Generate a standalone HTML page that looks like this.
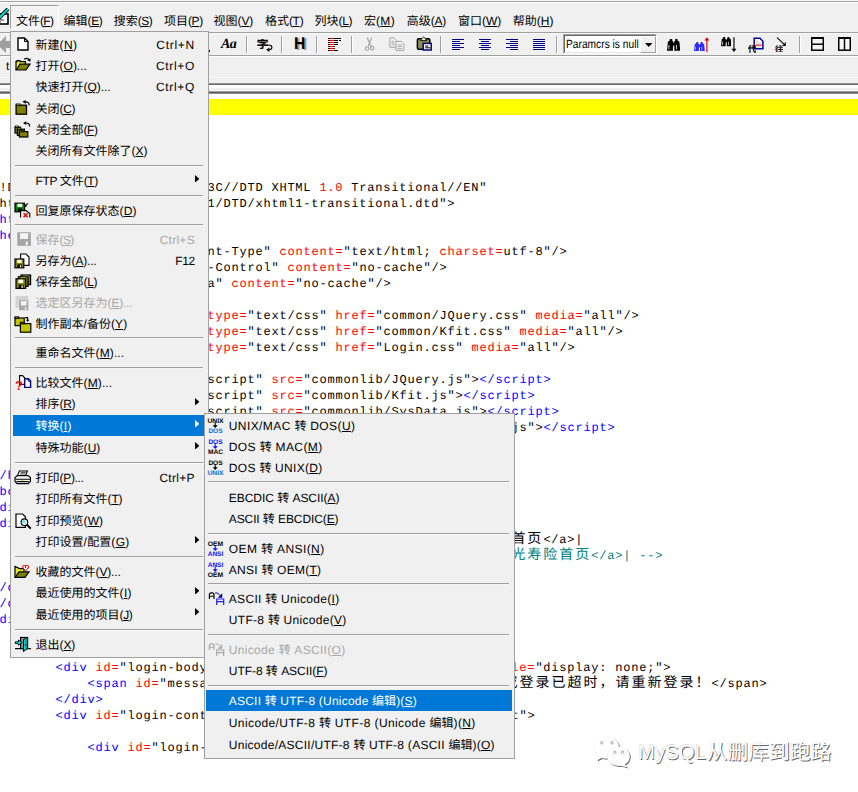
<!DOCTYPE html>
<html lang="zh"><head><meta charset="utf-8"><title>UltraEdit</title>
<style>
html,body{margin:0;padding:0;background:#fff}
body{width:858px;height:792px;overflow:hidden}
#app{position:relative;width:858px;height:792px;overflow:hidden;background:#fff;font-family:"Liberation Sans","Noto Sans CJK SC",sans-serif;font-kerning:none;text-rendering:geometricPrecision}
#app div,#app svg.a{position:absolute}
.r{white-space:nowrap;font:12px/16px "Liberation Sans","Noto Sans CJK SC",sans-serif;color:#000}
.r u{text-decoration:underline;text-underline-offset:1px;text-decoration-thickness:1px}
.code{white-space:pre;font:12px/16px "Liberation Mono",monospace;letter-spacing:0.798px;color:#000;left:-8.6px}
.code .cj{font-family:"Liberation Mono","Noto Sans CJK SC",monospace;font-size:14px;letter-spacing:2px;line-height:1}
.b{color:#00f}.rd{color:#f00}.t{color:#008080}.o{color:#ff8000}
</style></head>
<body>
<div id="app">
<div style="left:0px;top:0px;width:858px;height:99px;background:#f0f0f0;"></div>
<div style="left:0px;top:0px;width:858px;height:1px;background:#f6f6f6;"></div>
<div style="left:0px;top:1px;width:858px;height:1px;background:#a0a0a0;"></div>
<div style="left:0px;top:2px;width:858px;height:1px;background:#fff;"></div>
<div style="left:0px;top:32px;width:858px;height:1px;background:#a0a0a0;"></div>
<div style="left:0px;top:33px;width:858px;height:1px;background:#fafafa;"></div>
<div style="left:0px;top:55px;width:858px;height:1px;background:#a0a0a0;"></div>
<div style="left:0px;top:56px;width:858px;height:1px;background:#fff;"></div>
<div style="left:0px;top:77px;width:858px;height:1px;background:#f8f8f8;"></div>
<div style="left:0px;top:83px;width:858px;height:1px;background:#909090;"></div>
<div style="left:0px;top:84px;width:858px;height:1px;background:#686868;"></div>
<div style="left:0px;top:85px;width:858px;height:3px;background:#fff;"></div>
<div style="left:0px;top:88px;width:858px;height:3px;background:#f0f0f0;"></div>
<div style="left:0px;top:91px;width:858px;height:1px;background:#a0a0a0;"></div>
<div style="left:0px;top:92px;width:858px;height:1px;background:#606060;"></div>
<div style="left:0px;top:93px;width:858px;height:1px;background:#888;"></div>
<div style="left:0px;top:94px;width:858px;height:5px;background:#fff;"></div>
<div style="left:0px;top:99px;width:858px;height:16px;background:#ffff00;"></div>
<div class="code" style="top:180.00px">&lt;!DOCTYPE html PUBLIC "-//W3C//DTD XHTML <span class="rd">1.0</span> Transitional//EN"</div>
<div class="code" style="top:196.00px">"html.dtd/www.w3.org/TR/xht1/DTD/xhtml1-transitional.dtd"&gt;</div>
<div class="code" style="top:212.00px"><span class="b">&lt;html&gt;</span></div>
<div class="code" style="top:228.00px"><span class="b">&lt;head&gt;</span></div>
<div class="code" style="top:244.00px">    <span class="b">&lt;meta </span><span class="rd">http-equiv=</span>"Content-Type" <span class="rd">content=</span>"text/html; <span class="rd">charset=</span>utf-8"/&gt;</div>
<div class="code" style="top:260.00px">    <span class="b">&lt;meta </span><span class="rd">http-equiv=</span>"Cache-Control" <span class="rd">content=</span>"no-cache"/&gt;</div>
<div class="code" style="top:276.00px">    <span class="b">&lt;meta </span><span class="rd">http-equiv=</span>"Pragma" <span class="rd">content=</span>"no-cache"/&gt;</div>
<div class="code" style="top:308.00px">    <span class="b">&lt;link </span><span class="rd">rel=</span>"stylesheet" <span class="rd">type=</span>"text/css" <span class="rd">href=</span>"common/JQuery.css" <span class="rd">media=</span>"all"/&gt;</div>
<div class="code" style="top:324.00px">    <span class="b">&lt;link </span><span class="rd">rel=</span>"stylesheet" <span class="rd">type=</span>"text/css" <span class="rd">href=</span>"common/Kfit.css" <span class="rd">media=</span>"all"/&gt;</div>
<div class="code" style="top:340.00px">    <span class="b">&lt;link </span><span class="rd">rel=</span>"stylesheet" <span class="rd">type=</span>"text/css" <span class="rd">href=</span>"Login.css" <span class="rd">media=</span>"all"/&gt;</div>
<div class="code" style="top:372.00px">    <span class="b">&lt;script </span><span class="rd">type=</span>"text/javascript" <span class="rd">src=</span>"commonlib/JQuery.js"&gt;<span class="b">&lt;/script&gt;</span></div>
<div class="code" style="top:388.00px">    <span class="b">&lt;script </span><span class="rd">type=</span>"text/javascript" <span class="rd">src=</span>"commonlib/Kfit.js"&gt;<span class="b">&lt;/script&gt;</span></div>
<div class="code" style="top:404.00px">    <span class="b">&lt;script </span><span class="rd">type=</span>"text/javascript" <span class="rd">src=</span>"commonlib/SysData.js"&gt;<span class="b">&lt;/script&gt;</span></div>
<div class="code" style="top:420.00px">    <span class="b">&lt;script </span><span class="rd">type=</span>"text/javascript" <span class="rd">src=</span>"commonlib/Kfit.Validator.js"&gt;<span class="b">&lt;/script&gt;</span></div>
<div class="code" style="top:468.00px"><span class="b">&lt;/head&gt;</span></div>
<div class="code" style="top:484.00px"><span class="b">&lt;body&gt;</span></div>
<div class="code" style="top:500.00px"><span class="b">&lt;div </span><span class="rd">id=</span>"login-top"&gt;</div>
<div class="code" style="top:516.00px"><span class="b">&lt;div </span><span class="rd">id=</span>"login-nav"&gt;</div>
<div class="code" style="top:532.00px">            <span class="b">&lt;a </span><span class="rd">href=</span>"/portal/kfit/index.html"&gt;                   <span class="cj">首页</span>&lt;/a&gt;|</div>
<div class="code" style="top:548.00px"><span class="t">            &lt;!-- &lt;a class=nav-life-index&gt;</span>                      <span class="t"><span class="cj">阳光寿险首页</span>&lt;/a&gt;| --&gt;</span></div>
<div class="code" style="top:580.00px"><span class="b">&lt;/div&gt;</span></div>
<div class="code" style="top:596.00px"><span class="b">&lt;/div&gt;</span></div>
<div class="code" style="top:612.00px"><span class="b">&lt;div </span><span class="rd">id=</span>"login-main"&gt;</div>
<div class="code" style="top:660.00px">        <span class="b">&lt;div </span><span class="rd">id=</span>"login-body-message" <span class="rd">class=</span>"login-message"    <span class="rd">style=</span>"display: none;"&gt;</div>
<div class="code" style="top:676.00px">            <span class="b">&lt;span </span><span class="rd">id=</span>"message-contents"&gt;<span class="cj">对不起，您还没有登录系统或登录已超时，请重新登录！</span>&lt;/span&gt;</div>
<div class="code" style="top:692.00px">        <span class="b">&lt;/div&gt;</span></div>
<div class="code" style="top:708.00px">        <span class="b">&lt;div </span><span class="rd">id=</span>"login-content" <span class="rd">class=</span>"login-content-default-right"&gt;</div>
<div class="code" style="top:740.00px">            <span class="b">&lt;div </span><span class="rd">id=</span>"login-form"&gt;</div>
<div style="left:10px;top:5px;width:49px;height:24px;background:#f3f3f3;box-sizing:border-box;border:1px solid;border-color:#a0a0a0 #fff #fff #a0a0a0"></div>
<div class="r" aria-label="文件(F)" style="left:16.00px;top:12.50px;">文件<span style="letter-spacing:-0.707px">(<u>F</u>)</span></div>
<div class="r" aria-label="编辑(E)" style="left:63.60px;top:12.50px;">编辑<span style="letter-spacing:-0.465px">(<u>E</u>)</span></div>
<div class="r" aria-label="搜索(S)" style="left:113.80px;top:12.50px;">搜索<span style="letter-spacing:-0.599px">(<u>S</u>)</span></div>
<div class="r" aria-label="项目(P)" style="left:164.10px;top:12.50px;">项目<span style="letter-spacing:-0.499px">(<u>P</u>)</span></div>
<div class="r" aria-label="视图(V)" style="left:213.60px;top:12.50px;">视图<span style="letter-spacing:-0.199px">(<u>V</u>)</span></div>
<div class="r" aria-label="格式(T)" style="left:264.90px;top:12.50px;">格式<span style="letter-spacing:-0.307px">(<u>T</u>)</span></div>
<div class="r" aria-label="列块(L)" style="left:314.50px;top:12.50px;">列块<span style="letter-spacing:-0.322px">(<u>L</u>)</span></div>
<div class="r" aria-label="宏(M)" style="left:363.90px;top:12.50px;">宏<span style="letter-spacing:0.404px">(<u>M</u>)</span></div>
<div class="r" aria-label="高级(A)" style="left:406.80px;top:12.50px;">高级<span style="letter-spacing:-0.265px">(<u>A</u>)</span></div>
<div class="r" aria-label="窗口(W)" style="left:457.90px;top:12.50px;">窗口<span style="letter-spacing:-0.006px">(<u>W</u>)</span></div>
<div class="r" aria-label="帮助(H)" style="left:512.70px;top:12.50px;">帮助<span style="letter-spacing:0.014px">(<u>H</u>)</span></div>
<div style="left:246px;top:36px;width:1px;height:17px;background:#a0a0a0;"></div>
<div style="left:247px;top:36px;width:1px;height:17px;background:#fff;"></div>
<div style="left:281px;top:36px;width:1px;height:17px;background:#a0a0a0;"></div>
<div style="left:282px;top:36px;width:1px;height:17px;background:#fff;"></div>
<div style="left:316px;top:36px;width:1px;height:17px;background:#a0a0a0;"></div>
<div style="left:317px;top:36px;width:1px;height:17px;background:#fff;"></div>
<div style="left:351px;top:36px;width:1px;height:17px;background:#a0a0a0;"></div>
<div style="left:352px;top:36px;width:1px;height:17px;background:#fff;"></div>
<div style="left:440px;top:36px;width:1px;height:17px;background:#a0a0a0;"></div>
<div style="left:441px;top:36px;width:1px;height:17px;background:#fff;"></div>
<div style="left:556px;top:36px;width:1px;height:17px;background:#a0a0a0;"></div>
<div style="left:557px;top:36px;width:1px;height:17px;background:#fff;"></div>
<div style="left:799px;top:36px;width:1px;height:17px;background:#a0a0a0;"></div>
<div style="left:800px;top:36px;width:1px;height:17px;background:#fff;"></div>
<svg class="a" style="left:0px;top:36px" width="10" height="17" viewBox="0 0 10 17" ><path d="M10 5 H6 V0 L-3 8.5 L6 17 V12 H10 Z" fill="#a0a0a0" /></svg>
<svg class="a" style="left:0px;top:8px" width="9" height="17" viewBox="0 0 9 17" ><rect x="-6" y="6" width="14" height="10" fill="#fff" stroke="#000" stroke-width="1.6"/><path d="M-2 11 L8 1" fill="none" stroke="#000" stroke-width="4" /><path d="M-2 11 L8 1" fill="none" stroke="#00d8d8" stroke-width="2" /><path d="M-4 12 h8 M-4 14 h5" fill="none" stroke="#000" stroke-width="0.8" /></svg>
<div style="left:221px;top:37.2px;font:italic bold 14px/16px 'Liberation Serif',serif;letter-spacing:-0.7px;color:#000">Aa</div>
<div style="left:208.6px;top:49.6px;width:1.6px;height:2px;background:#000;"></div>
<svg class="a" style="left:257px;top:38.6px" width="10.8" height="10.4" viewBox="30 -850 940 940" preserveAspectRatio="none"><text x="0" y="0" font-size="1000" font-family="'Liberation Sans', 'Noto Sans CJK SC', sans-serif" font-weight="500" fill="#000" stroke="#000" stroke-width="36">字</text></svg>
<svg class="a" style="left:264.4px;top:43.6px" width="9" height="9" viewBox="0 0 9 9" ><path d="M3.4 1.2 H5.8 Q7.9 1.4 7.9 3.6 Q7.9 5.6 5.2 5.7" fill="none" stroke="#000" stroke-width="1.1" /><path d="M2.2 5.7 L5.4 3.5 V7.9 Z" fill="#000" /></svg>
<div style="left:295.6px;top:34.6px;font:bold 17px/20px 'Liberation Sans',sans-serif;color:#9a9a9a;transform:scaleX(.92);transform-origin:0 0">H</div>
<div style="left:294.4px;top:34.2px;font:bold 17px/20px 'Liberation Sans',sans-serif;color:#000;transform:scaleX(.92);transform-origin:0 0">H</div>
<svg class="a" style="left:328px;top:38px" width="14" height="14" viewBox="0 0 14 14" shape-rendering="crispEdges"><rect x="0" y="0" width="13" height="1" fill="#000" /><rect x="2" y="0" width="4" height="1" fill="#ff0000" /><rect x="0" y="2" width="10" height="1" fill="#000" /><rect x="2" y="2" width="4" height="1" fill="#ff0000" /><rect x="0" y="4" width="10" height="1" fill="#000" /><rect x="2" y="4" width="4" height="1" fill="#ff0000" /><rect x="0" y="6" width="10" height="1" fill="#000" /><rect x="2" y="6" width="4" height="1" fill="#ff0000" /><rect x="0" y="8" width="7" height="1" fill="#000" /><rect x="2" y="8" width="4" height="1" fill="#ff0000" /><rect x="0" y="10" width="7" height="1" fill="#000" /><rect x="2" y="10" width="4" height="1" fill="#ff0000" /><rect x="0" y="12" width="10" height="1" fill="#000" /><rect x="2" y="12" width="4" height="1" fill="#ff0000" /><rect x="11" y="2" width="2" height="1" fill="#000" /></svg>
<svg class="a" style="left:364px;top:36.5px" width="11" height="15" viewBox="0 0 11 15" ><path d="M3.1 0.6 L7.2 9.6 M7.6 0.6 L4 9.8" fill="none" stroke="#a4a4a4" stroke-width="1.15" /><circle cx="3.1" cy="11.5" r="1.75" fill="none" stroke="#a4a4a4" stroke-width="1.1"/><circle cx="8.1" cy="11.1" r="1.75" fill="none" stroke="#a4a4a4" stroke-width="1.1"/></svg>
<svg class="a" style="left:389px;top:36.6px" width="16" height="14" viewBox="0 0 16 14" ><path d="M0.9 0.9 h3.9 l2.5 2.5 v6.9 h-6.4 Z" fill="#f4f4f4" stroke="#a4a4a4" stroke-width="1" /><rect x="2.5" y="3.9" width="3" height="0.9" fill="#a4a4a4" /><rect x="2.5" y="5.7" width="3" height="0.9" fill="#a4a4a4" /><rect x="2.5" y="7.5" width="3" height="0.9" fill="#a4a4a4" /><path d="M6.9 4.4 h5.5 l2.5 2.5 v6.5 h-8 Z" fill="#f4f4f4" stroke="#a4a4a4" stroke-width="1" /><rect x="8.5" y="7.4" width="4.6" height="0.9" fill="#a4a4a4" /><rect x="8.5" y="9.2" width="4.6" height="0.9" fill="#a4a4a4" /><rect x="8.5" y="11" width="4.6" height="0.9" fill="#a4a4a4" /></svg>
<svg class="a" style="left:415.5px;top:36.3px" width="17" height="15.5" viewBox="0 0 17 15.5" ><rect x="1.4" y="2.8" width="12.4" height="10.4" fill="#8e8e52" stroke="#000" stroke-width="1.5" rx="1.2"/><path d="M4.6 4.6 H10.6 L9.4 2.6 L7.6 1 L5.8 2.6 Z" fill="#fff" stroke="#000" stroke-width="0.9" /><path d="M6.4 3.4 L7.6 1.9 L8.8 3.4 Z" fill="#e8e800" /><rect x="7.2" y="7.4" width="8" height="6.6" fill="#fff" stroke="#000080" stroke-width="1.5"/><rect x="9.2" y="9.6" width="3.2" height="1" fill="#000" /><rect x="9.2" y="11.3" width="5" height="1" fill="#000" /></svg>
<svg class="a" style="left:452px;top:39px" width="13" height="12" viewBox="0 0 13 12" shape-rendering="crispEdges"><rect x="0" y="0" width="12" height="1" fill="#00008b" /><rect x="0" y="2" width="8" height="1" fill="#00008b" /><rect x="0" y="4" width="12" height="1" fill="#00008b" /><rect x="0" y="6" width="8" height="1" fill="#00008b" /><rect x="0" y="8" width="12" height="1" fill="#00008b" /><rect x="0" y="10" width="8" height="1" fill="#00008b" /></svg>
<svg class="a" style="left:479px;top:39px" width="13" height="12" viewBox="0 0 13 12" shape-rendering="crispEdges"><rect x="0" y="0" width="12" height="1" fill="#00008b" /><rect x="2" y="2" width="8" height="1" fill="#00008b" /><rect x="0" y="4" width="12" height="1" fill="#00008b" /><rect x="2" y="6" width="8" height="1" fill="#00008b" /><rect x="0" y="8" width="12" height="1" fill="#00008b" /><rect x="2" y="10" width="8" height="1" fill="#00008b" /></svg>
<svg class="a" style="left:506px;top:39px" width="13" height="12" viewBox="0 0 13 12" shape-rendering="crispEdges"><rect x="0" y="0" width="12" height="1" fill="#00008b" /><rect x="4" y="2" width="8" height="1" fill="#00008b" /><rect x="0" y="4" width="12" height="1" fill="#00008b" /><rect x="4" y="6" width="8" height="1" fill="#00008b" /><rect x="0" y="8" width="12" height="1" fill="#00008b" /><rect x="4" y="10" width="8" height="1" fill="#00008b" /></svg>
<svg class="a" style="left:533px;top:39px" width="13" height="12" viewBox="0 0 13 12" shape-rendering="crispEdges"><rect x="0" y="0" width="12" height="1" fill="#00008b" /><rect x="0" y="2" width="12" height="1" fill="#00008b" /><rect x="0" y="4" width="12" height="1" fill="#00008b" /><rect x="0" y="6" width="12" height="1" fill="#00008b" /><rect x="0" y="8" width="12" height="1" fill="#00008b" /><rect x="0" y="10" width="12" height="1" fill="#00008b" /></svg>
<div style="left:563px;top:34px;width:94px;height:20px;background:#fff;box-sizing:border-box;border:1px solid;border-color:#a0a0a0 #fff #fff #a0a0a0"></div>
<div style="left:564px;top:35px;width:92px;height:18px;background:#fff;box-sizing:border-box;border:1px solid;border-color:#696969 #e3e3e3 #e3e3e3 #696969"></div>
<div style="left:566.2px;top:36.8px;font:12px/14px 'Liberation Sans',sans-serif;color:#000;white-space:nowrap;transform:scaleX(.852);transform-origin:0 0">Paramcrs is null</div>
<div style="left:640px;top:36px;width:16px;height:17px;background:#f0f0f0;box-sizing:border-box;border:1px solid;border-color:#fff #a0a0a0 #a0a0a0 #fff"></div>
<svg class="a" style="left:644.5px;top:42.8px" width="7.4" height="4" viewBox="0 0 7.4 4" ><path d="M0 0 H7.4 L3.7 4 Z" fill="#000" /></svg>
<svg class="a" style="left:666.8px;top:39.1px" width="13.4" height="11.7" viewBox="0 0 13.4 11.7" ><path d="M2.8 0 H5.2 V1.5 L6.2 2.8 L5.9 11.7 H0 L0.9 2.8 L2.8 1.5 Z" fill="#000" /><path d="M8.2 0 H10.5 V1.5 L12.4 2.8 L13.3 11.7 H7.4 L7.2 2.8 L8.2 1.5 Z" fill="#000" /><rect x="5.6" y="3.6" width="2.2" height="3" fill="#000" /><rect x="1.5" y="6" width="0.8" height="4.3" fill="#fff" /><rect x="9.2" y="6" width="0.8" height="4.3" fill="#fff" /></svg>
<svg class="a" style="left:694px;top:42.2px" width="10.9" height="9.3" viewBox="0 0 13.4 11.7" preserveAspectRatio="none"><path d="M2.8 0 H5.2 V1.5 L6.2 2.8 L5.9 11.7 H0 L0.9 2.8 L2.8 1.5 Z" fill="#2828ff" /><path d="M8.2 0 H10.5 V1.5 L12.4 2.8 L13.3 11.7 H7.4 L7.2 2.8 L8.2 1.5 Z" fill="#2828ff" /><rect x="5.6" y="3.6" width="2.2" height="3" fill="#2828ff" /><rect x="1.5" y="6" width="0.8" height="4.3" fill="#d8d8ff" /><rect x="9.2" y="6" width="0.8" height="4.3" fill="#d8d8ff" /></svg>
<svg class="a" style="left:703.5px;top:36.5px" width="6.4" height="15.2" viewBox="0 0 6.4 15.2" ><path d="M2.9 15 V2" fill="none" stroke="#e00000" stroke-width="1.15" /><path d="M0.5 3.6 L2.9 0.3 L5.3 3.6 Z" fill="#e00000" /></svg>
<svg class="a" style="left:720.9px;top:37.3px" width="10.6" height="9.3" viewBox="0 0 13.4 11.7" preserveAspectRatio="none"><path d="M2.8 0 H5.2 V1.5 L6.2 2.8 L5.9 11.7 H0 L0.9 2.8 L2.8 1.5 Z" fill="#000" /><path d="M8.2 0 H10.5 V1.5 L12.4 2.8 L13.3 11.7 H7.4 L7.2 2.8 L8.2 1.5 Z" fill="#000" /><rect x="5.6" y="3.6" width="2.2" height="3" fill="#000" /><rect x="1.5" y="6" width="0.8" height="4.3" fill="#fff" /><rect x="9.2" y="6" width="0.8" height="4.3" fill="#fff" /></svg>
<svg class="a" style="left:730.6px;top:37px" width="6.4" height="15.2" viewBox="0 0 6.4 15.2" ><path d="M2.95 0.2 V13" fill="none" stroke="#000" stroke-width="1.15" /><path d="M0.5 11.8 L2.95 14.9 L5.4 11.8 Z" fill="#000" /></svg>
<svg class="a" style="left:752.6px;top:36.5px" width="11.5" height="13" viewBox="0 0 11.5 13" ><path d="M1.2 1.2 H7 L9.9 4.2 V11.8 H1.2 Z" fill="#fff" stroke="#000090" stroke-width="1.5" /><rect x="3" y="3.8" width="2.6" height="0.7" fill="#a8a8a8" /><rect x="3" y="5.8" width="5.4" height="0.7" fill="#a8a8a8" /><rect x="2.8" y="7.6" width="5.8" height="1.1" fill="#f00000" /><rect x="3" y="9.7" width="5.4" height="0.7" fill="#a8c8c8" /></svg>
<svg class="a" style="left:747.6px;top:44.6px" width="8.8" height="8" viewBox="20 -860 960 960" preserveAspectRatio="none"><text x="0" y="0" font-size="1000" font-family="'Liberation Sans', 'Noto Sans CJK SC', sans-serif" font-weight="500" fill="#000" stroke="#000" stroke-width="30">代</text></svg>
<svg class="a" style="left:776px;top:36.5px" width="11" height="10" viewBox="0 0 11 10" ><path d="M1 0.7 L8.8 7.9" fill="none" stroke="#000" stroke-width="1.05" /><path d="M9.9 9 L9.7 4.6 L8.2 7.2 L5.4 8.8 Z" fill="#000" /></svg>
<svg class="a" style="left:774.7px;top:44.6px" width="8.8" height="7.8" viewBox="20 -860 960 960" preserveAspectRatio="none"><text x="0" y="0" font-size="1000" font-family="'Liberation Sans', 'Noto Sans CJK SC', sans-serif" font-weight="500" fill="#000" stroke="#000" stroke-width="30">往</text></svg>
<svg class="a" style="left:811px;top:37px" width="13" height="14" viewBox="0 0 13 14" ><rect x="0.75" y="1" width="11.5" height="12.2" fill="#fff" stroke="#000" stroke-width="1.5"/><rect x="0" y="0" width="13" height="2" fill="#000" /><rect x="0.75" y="6.5" width="11.5" height="1.5" fill="#000" /><rect x="2" y="3.5" width="9" height="0.5" fill="#d8d8d8" /><rect x="2" y="5" width="9" height="0.5" fill="#d8d8d8" /><rect x="2" y="9.5" width="9" height="0.5" fill="#d8d8d8" /><rect x="2" y="11" width="9" height="0.5" fill="#d8d8d8" /></svg>
<svg class="a" style="left:838px;top:37px" width="13" height="14" viewBox="0 0 13 14" ><rect x="0.75" y="1" width="11.5" height="12.2" fill="#fff" stroke="#000" stroke-width="1.5"/><rect x="0" y="0" width="13" height="2" fill="#000" /><rect x="5.75" y="1" width="1.5" height="12" fill="#000" /><rect x="2" y="4" width="3" height="0.5" fill="#d8d8d8" /><rect x="8" y="4" width="3" height="0.5" fill="#d8d8d8" /><rect x="2" y="6" width="3" height="0.5" fill="#d8d8d8" /><rect x="8" y="6" width="3" height="0.5" fill="#d8d8d8" /><rect x="2" y="8" width="3" height="0.5" fill="#d8d8d8" /><rect x="8" y="8" width="3" height="0.5" fill="#d8d8d8" /><rect x="2" y="10" width="3" height="0.5" fill="#d8d8d8" /><rect x="8" y="10" width="3" height="0.5" fill="#d8d8d8" /></svg>
<div style="left:6px;top:58.5px;font:12px/14px 'Liberation Sans',sans-serif;color:#000">t</div>
<div style="left:10px;top:31px;width:199px;height:627px;background:#f0f0f0;box-sizing:border-box;border:1px solid #a0a0a0"></div>
<div style="left:15px;top:165px;width:188px;height:1px;background:#a0a0a0;"></div>
<div style="left:15px;top:166px;width:188px;height:1px;background:#f8f8f8;"></div>
<div style="left:15px;top:195px;width:188px;height:1px;background:#a0a0a0;"></div>
<div style="left:15px;top:196px;width:188px;height:1px;background:#f8f8f8;"></div>
<div style="left:15px;top:224px;width:188px;height:1px;background:#a0a0a0;"></div>
<div style="left:15px;top:225px;width:188px;height:1px;background:#f8f8f8;"></div>
<div style="left:15px;top:337px;width:188px;height:1px;background:#a0a0a0;"></div>
<div style="left:15px;top:338px;width:188px;height:1px;background:#f8f8f8;"></div>
<div style="left:15px;top:367px;width:188px;height:1px;background:#a0a0a0;"></div>
<div style="left:15px;top:368px;width:188px;height:1px;background:#f8f8f8;"></div>
<div style="left:15px;top:462px;width:188px;height:1px;background:#a0a0a0;"></div>
<div style="left:15px;top:463px;width:188px;height:1px;background:#f8f8f8;"></div>
<div style="left:15px;top:556px;width:188px;height:1px;background:#a0a0a0;"></div>
<div style="left:15px;top:557px;width:188px;height:1px;background:#f8f8f8;"></div>
<div style="left:15px;top:629px;width:188px;height:1px;background:#a0a0a0;"></div>
<div style="left:15px;top:630px;width:188px;height:1px;background:#f8f8f8;"></div>
<div class="r" aria-label="新建(N)" style="left:35.60px;top:37.15px;color:#000;">新建<span style="letter-spacing:0.347px">(<u>N</u>)</span></div>
<div class="r" aria-label="Ctrl+N" style="left:156.30px;top:37.15px;color:#000;"><span style="letter-spacing:0.711px">Ctrl+N</span></div>
<div class="r" aria-label="打开(O)..." style="left:35.60px;top:58.25px;color:#000;">打开<span style="letter-spacing:-0.038px">(<u>O</u>)...</span></div>
<div class="r" aria-label="Ctrl+O" style="left:156.00px;top:58.25px;color:#000;"><span style="letter-spacing:0.649px">Ctrl+O</span></div>
<div class="r" aria-label="快速打开(Q)..." style="left:35.60px;top:79.45px;color:#000;">快速打开<span style="letter-spacing:-0.088px">(<u>Q</u>)...</span></div>
<div class="r" aria-label="Ctrl+Q" style="left:156.00px;top:79.45px;color:#000;"><span style="letter-spacing:0.649px">Ctrl+Q</span></div>
<div class="r" aria-label="关闭(C)" style="left:35.60px;top:100.65px;color:#000;">关闭<span style="letter-spacing:-0.419px">(<u>C</u>)</span></div>
<div class="r" aria-label="关闭全部(F)" style="left:35.60px;top:121.85px;color:#000;">关闭全部<span style="letter-spacing:-0.541px">(<u>F</u>)</span></div>
<div class="r" aria-label="关闭所有文件除了(X)" style="left:35.60px;top:142.95px;color:#000;">关闭所有文件除了<span style="letter-spacing:-0.099px">(<u>X</u>)</span></div>
<div class="r" aria-label="FTP 文件(T)" style="left:35.60px;top:173.15px;color:#000;"><span style="letter-spacing:-0.417px">FTP </span>文件<span style="letter-spacing:-0.417px">(<u>T</u>)</span></div>
<svg class="a" style="left:194.8px;top:174.8px" width="4.4" height="7.6" viewBox="0 0 4.4 7.6" ><path d="M0 0 L4.4 3.8 L0 7.6 Z" fill="#000" /></svg>
<div class="r" aria-label="回复原保存状态(D)" style="left:35.60px;top:202.85px;color:#000;">回复原保存状态<span style="letter-spacing:0.047px">(<u>D</u>)</span></div>
<div class="r" aria-label="保存(S)" style="left:35.60px;top:232.25px;color:#a8a8a8;">保存<span style="letter-spacing:-0.632px">(<u>S</u>)</span></div>
<div class="r" aria-label="Ctrl+S" style="left:159.70px;top:232.25px;color:#a8a8a8;"><span style="letter-spacing:0.254px">Ctrl+S</span></div>
<div class="r" aria-label="另存为(A)..." style="left:35.60px;top:253.15px;color:#000;">另存为<span style="letter-spacing:-0.200px">(<u>A</u>)...</span></div>
<div class="r" aria-label="F12" style="left:175.30px;top:253.15px;color:#000;"><span style="letter-spacing:-0.359px">F12</span></div>
<div class="r" aria-label="保存全部(L)" style="left:35.60px;top:274.15px;color:#000;">保存全部<span style="letter-spacing:-0.389px">(<u>L</u>)</span></div>
<div class="r" aria-label="选定区另存为(E)..." style="left:35.60px;top:295.05px;color:#a8a8a8;">选定区另存为<span style="letter-spacing:-0.233px">(<u>E</u>)...</span></div>
<div class="r" aria-label="制作副本/备份(Y)" style="left:35.60px;top:315.85px;color:#000;">制作副本<span style="letter-spacing:0.067px">/</span>备份<span style="letter-spacing:0.067px">(<u>Y</u>)</span></div>
<div class="r" aria-label="重命名文件(M)..." style="left:35.60px;top:345.05px;color:#000;">重命名文件<span style="letter-spacing:0.085px">(<u>M</u>)...</span></div>
<div class="r" aria-label="比较文件(M)..." style="left:35.60px;top:375.15px;color:#000;">比较文件<span style="letter-spacing:0.102px">(<u>M</u>)...</span></div>
<div class="r" aria-label="排序(R)" style="left:35.60px;top:396.25px;color:#000;">排序<span style="letter-spacing:-0.386px">(<u>R</u>)</span></div>
<svg class="a" style="left:194.8px;top:397.9px" width="4.4" height="7.6" viewBox="0 0 4.4 7.6" ><path d="M0 0 L4.4 3.8 L0 7.6 Z" fill="#000" /></svg>
<div style="left:13px;top:414.9px;width:193px;height:20.9px;background:#0078d7;"></div>
<div class="r" aria-label="转换(I)" style="left:35.60px;top:418.00px;color:#fff;">转换<span style="letter-spacing:0.225px">(<u>I</u>)</span></div>
<svg class="a" style="left:194.8px;top:419.65px" width="4.4" height="7.6" viewBox="0 0 4.4 7.6" ><path d="M0 0 L4.4 3.8 L0 7.6 Z" fill="#fff" /></svg>
<div class="r" aria-label="特殊功能(U)" style="left:35.60px;top:440.05px;color:#000;">特殊功能<span style="letter-spacing:0.014px">(<u>U</u>)</span></div>
<svg class="a" style="left:194.8px;top:441.7px" width="4.4" height="7.6" viewBox="0 0 4.4 7.6" ><path d="M0 0 L4.4 3.8 L0 7.6 Z" fill="#000" /></svg>
<div class="r" aria-label="打印(P)..." style="left:35.60px;top:470.15px;color:#000;">打印<span style="letter-spacing:-0.350px">(<u>P</u>)...</span></div>
<div class="r" aria-label="Ctrl+P" style="left:159.40px;top:470.15px;color:#000;"><span style="letter-spacing:0.304px">Ctrl+P</span></div>
<div class="r" aria-label="打印所有文件(T)" style="left:35.60px;top:491.35px;color:#000;">打印所有文件<span style="letter-spacing:-0.241px">(<u>T</u>)</span></div>
<div class="r" aria-label="打印预览(W)" style="left:35.60px;top:512.95px;color:#000;">打印预览<span style="letter-spacing:0.061px">(<u>W</u>)</span></div>
<div class="r" aria-label="打印设置/配置(G)" style="left:35.60px;top:534.05px;color:#000;">打印设置<span style="letter-spacing:0.335px">/</span>配置<span style="letter-spacing:0.335px">(<u>G</u>)</span></div>
<svg class="a" style="left:194.8px;top:535.7px" width="4.4" height="7.6" viewBox="0 0 4.4 7.6" ><path d="M0 0 L4.4 3.8 L0 7.6 Z" fill="#000" /></svg>
<div class="r" aria-label="收藏的文件(V)..." style="left:35.60px;top:564.15px;color:#000;">收藏的文件<span style="letter-spacing:-0.183px">(<u>V</u>)...</span></div>
<div class="r" aria-label="最近使用的文件(I)" style="left:35.60px;top:585.25px;color:#000;">最近使用的文件<span style="letter-spacing:0.258px">(<u>I</u>)</span></div>
<svg class="a" style="left:194.8px;top:586.9px" width="4.4" height="7.6" viewBox="0 0 4.4 7.6" ><path d="M0 0 L4.4 3.8 L0 7.6 Z" fill="#000" /></svg>
<div class="r" aria-label="最近使用的项目(J)" style="left:35.60px;top:606.55px;color:#000;">最近使用的项目<span style="letter-spacing:-0.397px">(<u>J</u>)</span></div>
<svg class="a" style="left:194.8px;top:608.2px" width="4.4" height="7.6" viewBox="0 0 4.4 7.6" ><path d="M0 0 L4.4 3.8 L0 7.6 Z" fill="#000" /></svg>
<div class="r" aria-label="退出(X)" style="left:35.60px;top:637.25px;color:#000;">退出<span style="letter-spacing:-0.165px">(<u>X</u>)</span></div>
<div style="left:203.5px;top:412.5px;width:311.5px;height:346.2px;background:#f0f0f0;box-sizing:border-box;border:1px solid #a0a0a0"></div>
<div style="left:207.8px;top:481.3px;width:301.5px;height:1px;background:#a0a0a0;"></div>
<div style="left:207.8px;top:482.3px;width:301.5px;height:1px;background:#f8f8f8;"></div>
<div style="left:207.8px;top:533.3px;width:301.5px;height:1px;background:#a0a0a0;"></div>
<div style="left:207.8px;top:534.3px;width:301.5px;height:1px;background:#f8f8f8;"></div>
<div style="left:207.8px;top:583.1px;width:301.5px;height:1px;background:#a0a0a0;"></div>
<div style="left:207.8px;top:584.1px;width:301.5px;height:1px;background:#f8f8f8;"></div>
<div style="left:207.8px;top:634.2px;width:301.5px;height:1px;background:#a0a0a0;"></div>
<div style="left:207.8px;top:635.2px;width:301.5px;height:1px;background:#f8f8f8;"></div>
<div style="left:207.8px;top:685px;width:301.5px;height:1px;background:#a0a0a0;"></div>
<div style="left:207.8px;top:686px;width:301.5px;height:1px;background:#f8f8f8;"></div>
<div class="r" aria-label="UNIX/MAC 转 DOS(U)" style="left:228.80px;top:418.00px;color:#000;"><span style="letter-spacing:0.412px">UNIX/MAC </span>转<span style="letter-spacing:0.412px"> DOS(<u>U</u>)</span></div>
<div class="r" aria-label="DOS 转 MAC(M)" style="left:228.80px;top:439.10px;color:#000;"><span style="letter-spacing:0.407px">DOS </span>转<span style="letter-spacing:0.407px"> MAC(<u>M</u>)</span></div>
<div class="r" aria-label="DOS 转 UNIX(D)" style="left:228.80px;top:460.10px;color:#000;"><span style="letter-spacing:0.317px">DOS </span>转<span style="letter-spacing:0.317px"> UNIX(<u>D</u>)</span></div>
<div class="r" aria-label="EBCDIC 转 ASCII(A)" style="left:228.80px;top:489.60px;color:#000;"><span style="letter-spacing:-0.047px">EBCDIC </span>转<span style="letter-spacing:-0.047px"> ASCII(<u>A</u>)</span></div>
<div class="r" aria-label="ASCII 转 EBCDIC(E)" style="left:228.80px;top:511.30px;color:#000;"><span style="letter-spacing:-0.109px">ASCII </span>转<span style="letter-spacing:-0.109px"> EBCDIC(<u>E</u>)</span></div>
<div class="r" aria-label="OEM 转 ANSI(N)" style="left:228.80px;top:541.10px;color:#000;"><span style="letter-spacing:0.428px">OEM </span>转<span style="letter-spacing:0.428px"> ANSI(<u>N</u>)</span></div>
<div class="r" aria-label="ANSI 转 OEM(T)" style="left:228.80px;top:562.40px;color:#000;"><span style="letter-spacing:0.264px">ANSI </span>转<span style="letter-spacing:0.264px"> OEM(<u>T</u>)</span></div>
<div class="r" aria-label="ASCII 转 Unicode(I)" style="left:228.80px;top:591.40px;color:#000;"><span style="letter-spacing:0.308px">ASCII </span>转<span style="letter-spacing:0.308px"> Unicode(<u>I</u>)</span></div>
<div class="r" aria-label="UTF-8 转 Unicode(V)" style="left:228.80px;top:612.30px;color:#000;"><span style="letter-spacing:0.295px">UTF-8 </span>转<span style="letter-spacing:0.295px"> Unicode(<u>V</u>)</span></div>
<div class="r" aria-label="Unicode 转 ASCII(O)" style="left:228.80px;top:642.30px;color:#a8a8a8;"><span style="letter-spacing:0.314px">Unicode </span>转<span style="letter-spacing:0.314px"> ASCII(<u>O</u>)</span></div>
<div class="r" aria-label="UTF-8 转 ASCII(F)" style="left:228.80px;top:663.20px;color:#000;"><span style="letter-spacing:-0.049px">UTF-8 </span>转<span style="letter-spacing:-0.049px"> ASCII(<u>F</u>)</span></div>
<div style="left:206px;top:690.1px;width:306px;height:20.6px;background:#0078d7;"></div>
<div class="r" aria-label="ASCII 转 UTF-8 (Unicode 编辑)(S)" style="left:228.80px;top:693.20px;color:#fff;"><span style="letter-spacing:0.208px">ASCII </span>转<span style="letter-spacing:0.208px"> UTF-8 (Unicode </span>编辑<span style="letter-spacing:0.208px">)(<u>S</u>)</span></div>
<div class="r" aria-label="Unicode/UTF-8 转 UTF-8 (Unicode 编辑)(N)" style="left:228.80px;top:715.30px;color:#000;"><span style="letter-spacing:0.398px">Unicode/UTF-8 </span>转<span style="letter-spacing:0.398px"> UTF-8 (Unicode </span>编辑<span style="letter-spacing:0.398px">)(<u>N</u>)</span></div>
<div class="r" aria-label="Unicode/ASCII/UTF-8 转 UTF-8 (ASCII 编辑)(O)" style="left:228.80px;top:737.30px;color:#000;"><span style="letter-spacing:0.260px">Unicode/ASCII/UTF-8 </span>转<span style="letter-spacing:0.260px"> UTF-8 (ASCII </span>编辑<span style="letter-spacing:0.260px">)(<u>O</u>)</span></div>
<svg class="a" style="left:207.3px;top:417.9px" width="17" height="16" viewBox="0 0 17 16" ><text x="0.4" y="4.9" font-family="Liberation Sans, sans-serif" font-weight="bold" font-size="6.6" textLength="16.2" lengthAdjust="spacingAndGlyphs" fill="#000">UNIX</text><text x="1.4" y="15" font-family="Liberation Sans, sans-serif" font-weight="bold" font-size="6.6" textLength="14.2" lengthAdjust="spacingAndGlyphs" fill="#0a6fe0">DOS</text><path d="M8.2 4.6 V8" fill="none" stroke="#000" stroke-width="1.1" /><path d="M5.6 7.2 H10.8 L8.2 10 Z" fill="#000" /></svg>
<svg class="a" style="left:207.3px;top:438.9px" width="17" height="16" viewBox="0 0 17 16" ><text x="1.4" y="4.9" font-family="Liberation Sans, sans-serif" font-weight="bold" font-size="6.6" textLength="14.2" lengthAdjust="spacingAndGlyphs" fill="#1010ff">DOS</text><text x="0.9" y="15" font-family="Liberation Sans, sans-serif" font-weight="bold" font-size="6.6" textLength="15.2" lengthAdjust="spacingAndGlyphs" fill="#000">MAC</text><path d="M8.2 4.6 V8" fill="none" stroke="#1010ff" stroke-width="1.1" /><path d="M5.6 7.2 H10.8 L8.2 10 Z" fill="#1010ff" /></svg>
<svg class="a" style="left:207.3px;top:460px" width="17" height="16" viewBox="0 0 17 16" ><text x="1.4" y="4.9" font-family="Liberation Sans, sans-serif" font-weight="bold" font-size="6.6" textLength="14.2" lengthAdjust="spacingAndGlyphs" fill="#000">DOS</text><text x="0.4" y="15" font-family="Liberation Sans, sans-serif" font-weight="bold" font-size="6.6" textLength="16.2" lengthAdjust="spacingAndGlyphs" fill="#0a6fe0">UNIX</text><path d="M8.2 4.6 V8" fill="none" stroke="#000" stroke-width="1.1" /><path d="M5.6 7.2 H10.8 L8.2 10 Z" fill="#000" /></svg>
<svg class="a" style="left:207.3px;top:540.8px" width="17" height="16" viewBox="0 0 17 16" ><text x="0.8" y="4.9" font-family="Liberation Sans, sans-serif" font-weight="bold" font-size="6.6" textLength="15.4" lengthAdjust="spacingAndGlyphs" fill="#000">OEM</text><text x="0.7" y="15" font-family="Liberation Sans, sans-serif" font-weight="bold" font-size="6.6" textLength="15.6" lengthAdjust="spacingAndGlyphs" fill="#1010ff">ANSI</text><path d="M8.2 4.6 V8" fill="none" stroke="#1010ff" stroke-width="1.1" /><path d="M5.6 7.2 H10.8 L8.2 10 Z" fill="#1010ff" /></svg>
<svg class="a" style="left:207.3px;top:562px" width="17" height="16" viewBox="0 0 17 16" ><text x="0.7" y="4.9" font-family="Liberation Sans, sans-serif" font-weight="bold" font-size="6.6" textLength="15.6" lengthAdjust="spacingAndGlyphs" fill="#1010ff">ANSI</text><text x="0.8" y="15" font-family="Liberation Sans, sans-serif" font-weight="bold" font-size="6.6" textLength="15.4" lengthAdjust="spacingAndGlyphs" fill="#000">OEM</text><path d="M8.2 4.6 V8" fill="none" stroke="#1010ff" stroke-width="1.1" /><path d="M5.6 7.2 H10.8 L8.2 10 Z" fill="#1010ff" /></svg>
<svg class="a" style="left:208px;top:592px" width="17" height="14" viewBox="0 0 17 14" ><path d="M1.4 6.9 V2.1 L2.7 0.9 H4.7 L6 2.1 V6.9 M1.4 4.2 H6" fill="none" stroke="#000" stroke-width="1.15" /><path d="M7.2 1 H9.6 L12.2 3.6" fill="none" stroke="#000080" stroke-width="1" /><path d="M14.2 1.3 V5.7 H9.8 Z" fill="#000080" /><path d="M8.7 12.9 V7 H15.7 V12.9 M8.7 9.7 H15.7" fill="none" stroke="#2020ff" stroke-width="1.2" /></svg>
<svg class="a" style="left:208px;top:643px" width="17" height="14" viewBox="0 0 17 14" ><path d="M1.4 6.9 V2.1 L2.7 0.9 H4.7 L6 2.1 V6.9 M1.4 4.2 H6" fill="none" stroke="#a8a8a8" stroke-width="1.15" /><path d="M7.2 1 H9.6 L12.2 3.6" fill="none" stroke="#a8a8a8" stroke-width="1" /><path d="M14.2 1.3 V5.7 H9.8 Z" fill="#a8a8a8" /><path d="M8.7 12.9 V7 H15.7 V12.9 M8.7 9.7 H15.7" fill="none" stroke="#a8a8a8" stroke-width="1.2" /></svg>
<svg class="a" style="left:17px;top:36.5px" width="12" height="14" viewBox="0 0 12 14" ><path d="M1 1 H7.5 L11 4.5 V13 H1 Z" fill="#fff" stroke="#000" stroke-width="1.4" /><path d="M7.5 1 V4.5 H11" fill="none" stroke="#000" stroke-width="1" /></svg>
<svg class="a" style="left:15px;top:57px" width="17" height="15" viewBox="0 0 17 15" ><path d="M1 13 V4.6 H2 V3.6 H5 V4.6 H10.4 V7" fill="#e8e830" stroke="#000" stroke-width="1.2" /><path d="M1.2 13 L5 7.2 H15 L11 13 Z" fill="#808000" stroke="#000" stroke-width="1.2" /><path d="M9 2.4 q3 -2.4 5.4 0.6" fill="none" stroke="#000" stroke-width="1.1" /><path d="M15.6 1.2 l-0.2 3.6 l-3 -1.6 Z" fill="#000" /></svg>
<svg class="a" style="left:15px;top:100px" width="17" height="15" viewBox="0 0 17 15" ><rect x="1.1" y="5.2" width="10.4" height="9" fill="#808000" stroke="#000" stroke-width="1.3"/><rect x="1.2" y="4" width="4" height="1.6" fill="#e8e830" stroke="#000" stroke-width="0.9"/><path d="M14.2 5.4 q0.2 -3.8 -4.4 -3.6" fill="none" stroke="#000" stroke-width="1.2" /><path d="M7.4 1.8 l3.2 -1.8 v3.8 Z" fill="#000" /></svg>
<svg class="a" style="left:14px;top:121px" width="18" height="17" viewBox="0 0 18 17" ><rect x="1" y="6.2" width="5.5" height="5.8" fill="#808000" stroke="#000" stroke-width="1.2"/><rect x="1.3" y="5" width="3.2" height="1.4" fill="#e8e830" stroke="#000" stroke-width="0.8"/><rect x="3.4" y="8.2" width="7" height="6.2" fill="#808000" stroke="#000" stroke-width="1.2"/><rect x="3.7" y="7" width="3.2" height="1.4" fill="#e8e830" stroke="#000" stroke-width="0.8"/><rect x="5.4" y="10.6" width="8.4" height="5.4" fill="#808000" stroke="#000" stroke-width="1.2"/><rect x="5.7" y="9.4" width="3.2" height="1.4" fill="#e8e830" stroke="#000" stroke-width="0.8"/><path d="M15.6 5.6 q0.2 -3.8 -4.2 -3.6" fill="none" stroke="#000" stroke-width="1.2" /><path d="M9 2 l3.2 -1.8 v3.8 Z" fill="#000" /></svg>
<svg class="a" style="left:14px;top:202px" width="18" height="17" viewBox="0 0 18 17" ><rect x="1" y="1.2" width="9.6" height="8.6" fill="#008000" stroke="#000" stroke-width="1.2"/><rect x="3.4" y="1.8" width="4.8" height="3.268" fill="#fff" /><rect x="3.88" y="6.532" width="4.032" height="3.268" fill="#000" /><path d="M14 1.4 L11.6 3.6" fill="none" stroke="#000" stroke-width="1.2" /><path d="M10.6 4.8 l0.4 -2.6 l2.2 2.2 Z" fill="#000" /><path d="M6.6 15.6 V8.6 H12 L15.8 11.6 V15.6" fill="#f0f0f0" stroke="#000" stroke-width="1.1" /><path d="M9.6 11.2 L13.6 15.2 M13.6 11.2 L9.6 15.2" fill="none" stroke="#f00000" stroke-width="1.5" /></svg>
<svg class="a" style="left:16.5px;top:232px" width="15" height="14.5" viewBox="0 0 15 14.5" ><rect x="0.3" y="0.2" width="13.6" height="13.6" fill="#a6a6a6" /><rect x="3.02" y="1.2" width="8.16" height="5.712" fill="#f4f4f4" /><rect x="8.732" y="9.72" width="2.176" height="3.264" fill="#f4f4f4" /><rect x="12.3" y="1" width="0.9" height="0.9" fill="#f4f4f4" /></svg>
<svg class="a" style="left:14px;top:252.5px" width="18" height="16" viewBox="0 0 18 16" ><path d="M6.6 1 H12 L15 4 V12.4 H6.6 Z" fill="#fff" stroke="#000" stroke-width="1.1" /><rect x="1" y="6" width="8.8" height="8.8" fill="#808000" stroke="#000" stroke-width="1.2"/><rect x="3.2" y="6.8" width="4.4" height="3.168" fill="#fff" /><rect x="3.464" y="11.456" width="4.4" height="3.168" fill="#000" /><rect x="5.928" y="12.16" width="1.232" height="2.112" fill="#fff" /></svg>
<svg class="a" style="left:14.5px;top:273.5px" width="17" height="16" viewBox="0 0 17 16" ><rect x="6" y="1" width="9.6" height="9.6" fill="#808000" stroke="#000" stroke-width="1.2"/><rect x="8.4" y="1.8" width="4.8" height="3.456" fill="#fff" /><rect x="8.688" y="6.952" width="4.8" height="3.456" fill="#000" /><rect x="11.376" y="7.72" width="1.344" height="2.304" fill="#fff" /><rect x="3.4" y="2.8" width="9.6" height="9.6" fill="#808000" stroke="#000" stroke-width="1.2"/><rect x="5.8" y="3.6" width="4.8" height="3.456" fill="#fff" /><rect x="6.088" y="8.752" width="4.8" height="3.456" fill="#000" /><rect x="8.776" y="9.52" width="1.344" height="2.304" fill="#fff" /><rect x="1" y="4.8" width="9.6" height="9.6" fill="#808000" stroke="#000" stroke-width="1.2"/><rect x="3.4" y="5.6" width="4.8" height="3.456" fill="#fff" /><rect x="3.688" y="10.752" width="4.8" height="3.456" fill="#000" /><rect x="6.376" y="11.52" width="1.344" height="2.304" fill="#fff" /></svg>
<svg class="a" style="left:15px;top:295.5px" width="15" height="15" viewBox="0 0 15 15" ><rect x="0.6" y="0.6" width="12.6" height="0.9" fill="#b0b0b0" /><rect x="0.6" y="2.6" width="12.6" height="0.9" fill="#b0b0b0" /><rect x="0.6" y="4.6" width="3" height="0.9" fill="#b0b0b0" /><rect x="0.6" y="6.6" width="3" height="0.9" fill="#b0b0b0" /><rect x="0.6" y="8.6" width="3" height="0.9" fill="#b0b0b0" /><rect x="0.6" y="10.6" width="3" height="0.9" fill="#b0b0b0" /><rect x="4" y="4.2" width="9.4" height="10" fill="#a8a8a8" /><rect x="5.88" y="5.2" width="5.64" height="4.2" fill="#f4f4f4" /><rect x="9.828" y="11.2" width="1.504" height="2.4" fill="#f4f4f4" /><rect x="11.8" y="5" width="0.9" height="0.9" fill="#f4f4f4" /></svg>
<svg class="a" style="left:14px;top:315.5px" width="18" height="17.5" viewBox="0 0 18 17.5" ><rect x="1" y="2" width="9.2" height="7.6" fill="#c4c400" stroke="#000" stroke-width="1.2"/><rect x="1" y="0.8" width="3.6" height="1.6" fill="#c4c400" stroke="#000" stroke-width="1"/><rect x="6.4" y="7.6" width="10.4" height="8.6" fill="#c4c400" stroke="#000" stroke-width="1.2"/><rect x="6.4" y="6.2" width="4" height="1.6" fill="#c4c400" stroke="#000" stroke-width="1"/><path d="M11 1.6 H13.6 V4.6" fill="none" stroke="#000" stroke-width="1.1" /><path d="M11.8 3.8 H15.4 L13.6 6 Z" fill="#000" /></svg>
<svg class="a" style="left:14px;top:374px" width="18" height="17" viewBox="0 0 18 17" ><path d="M5.6 1.6 H8.6 L10.6 3.8 V10.4 H5.6 Z" fill="#fff" stroke="#000" stroke-width="1.1" /><path d="M10.7 4.8 H14.4 L16.6 7 V13.4 H10.7 Z" fill="#fff" stroke="#000080" stroke-width="1.4" /><path d="M14.2 5 V7.2 H16.4" fill="none" stroke="#000080" stroke-width="0.9" /><text x="1" y="16" font-family="Liberation Sans, sans-serif" font-weight="bold" font-size="12.8" fill="#ff0000">?</text></svg>
<svg class="a" style="left:14px;top:469.5px" width="18" height="15" viewBox="0 0 18 15" ><path d="M5.4 1 H13.4 L11.4 5.6 H3.4 Z" fill="#fff" stroke="#000" stroke-width="1.1" /><path d="M6.6 2.6 H11.6 M6 4 H11" fill="none" stroke="#000" stroke-width="0.7" /><path d="M1 7.6 L3.4 5.6 H14 L16.4 7.6 V11.6 L14.2 13.6 H3 L1 11.6 Z" fill="#fff" stroke="#000" stroke-width="1.2" /><path d="M1.4 9.2 H16 M2.4 11.6 H14.8" fill="none" stroke="#000" stroke-width="1.1" /><rect x="6.6" y="10" width="3" height="0.9" fill="#e0e000" /></svg>
<svg class="a" style="left:14.5px;top:512.5px" width="18" height="17" viewBox="0 0 18 17" ><path d="M1 1 H7.6 L10.4 3.8 V14.4 H1 Z" fill="#fff" stroke="#000" stroke-width="1.2" /><circle cx="9.4" cy="9.2" r="3.3" fill="#fff" stroke="#000" stroke-width="1.1"/><circle cx="8.8" cy="8.8" r="1.5" fill="#40e8ff"/><path d="M11.9 11.8 L15.8 15.6" fill="none" stroke="#000" stroke-width="1.9" /></svg>
<svg class="a" style="left:14px;top:563.5px" width="18" height="15" viewBox="0 0 18 15" ><path d="M1 13.6 V2.4 L5.6 4.6 H10 V7" fill="#e8e830" stroke="#000" stroke-width="1.2" /><path d="M1.2 13.4 L5 7.8 H15 L11 13.4 Z" fill="#808000" stroke="#000" stroke-width="1.2" /><circle cx="10.2" cy="3" r="1.6" fill="#fff" stroke="#e00000" stroke-width="1"/><circle cx="13" cy="3" r="1.6" fill="#fff" stroke="#e00000" stroke-width="1"/><path d="M9 4 L11.6 6.8 L14.2 4" fill="#fff" stroke="#e00000" stroke-width="1" /></svg>
<svg class="a" style="left:14px;top:636px" width="18" height="17" viewBox="0 0 18 17" ><rect x="6.6" y="1.5" width="7" height="11.2" fill="#a0a0a0" stroke="#000" stroke-width="1.2"/><path d="M1 12.6 H6.6 M13.8 12.6 H17" fill="none" stroke="#000" stroke-width="1.1" /><path d="M9.4 3.6 L13.3 1.6 V12.8 L9.4 15.6 Z" fill="#00d0d0" stroke="#000" stroke-width="1" /><path d="M11.6 2.6 L13.2 1.8 V12.6 L11.6 13.8 Z" fill="#009898" /><rect x="11.2" y="8" width="0.9" height="1.8" fill="#000" /><path d="M1.2 5.8 H4.4 V4 L8.2 6.6 L4.4 9.2 V7.6 H1.2 Z" fill="#00f0f0" stroke="#000" stroke-width="0.9" /></svg>
<div class="r nw" aria-label="MySQL" style="left:637.80px;top:739.40px;color:#dcdcdc;font-size:20px;line-height:26.6667px;"><span style="letter-spacing:0.304px">MySQL</span></div>
<div class="r nw" aria-label="从删库到跑路" style="left:706.20px;top:738.60px;color:#dcdcdc;font-size:20.8px;line-height:27.7333px;">从删库到跑路</div>
<div class="r nw" aria-label="MySQL" style="left:639.10px;top:740.70px;color:#666;font-size:20px;line-height:26.6667px;"><span style="letter-spacing:0.304px">MySQL</span></div>
<div class="r nw" aria-label="从删库到跑路" style="left:707.50px;top:739.90px;color:#666;font-size:20.8px;line-height:27.7333px;">从删库到跑路</div>
<div class="r nw" aria-label="MySQL" style="left:638.20px;top:739.80px;color:#fff;font-size:20px;line-height:26.6667px;"><span style="letter-spacing:0.304px">MySQL</span></div>
<div class="r nw" aria-label="从删库到跑路" style="left:706.60px;top:739.00px;color:#fff;font-size:20.8px;line-height:27.7333px;">从删库到跑路</div>
<svg class="a" style="left:591.6px;top:732.6px" width="40" height="37" viewBox="0 0 40 37" ><g fill="#e0e0e0"><ellipse cx="14.6" cy="14.6" rx="12.4" ry="11"/><path d="M6.4 21.6 L4.6 27.6 L11.6 24 Z" fill="#e0e0e0" /></g></svg>
<svg class="a" style="left:592.9px;top:733.9px" width="40" height="37" viewBox="0 0 40 37" ><g fill="#686868"><ellipse cx="14.6" cy="14.6" rx="12.4" ry="11"/><path d="M6.4 21.6 L4.6 27.6 L11.6 24 Z" fill="#686868" /></g></svg>
<svg class="a" style="left:592px;top:733px" width="40" height="37" viewBox="0 0 40 37" ><g fill="#fff"><ellipse cx="14.6" cy="14.6" rx="12.4" ry="11"/><path d="M6.4 21.6 L4.6 27.6 L11.6 24 Z" fill="#fff" /></g></svg>
<svg class="a" style="left:591.5px;top:732.5px" width="40" height="37" viewBox="0 0 40 37" ><g fill="#c4c4c4"><ellipse cx="26.6" cy="23.4" rx="11.2" ry="9.6"/><path d="M32 30.6 L35.4 34.6 L28 32.4 Z" fill="#c4c4c4" /></g></svg>
<svg class="a" style="left:592.9px;top:733.9px" width="40" height="37" viewBox="0 0 40 37" ><g fill="#686868"><ellipse cx="26.6" cy="23.4" rx="11.2" ry="9.6"/><path d="M32 30.6 L35.4 34.6 L28 32.4 Z" fill="#686868" /></g></svg>
<svg class="a" style="left:592px;top:733px" width="40" height="37" viewBox="0 0 40 37" ><g fill="#fff"><ellipse cx="26.6" cy="23.4" rx="11.2" ry="9.6"/><path d="M32 30.6 L35.4 34.6 L28 32.4 Z" fill="#fff" /></g></svg>
<svg class="a" style="left:592px;top:733px" width="40" height="37" viewBox="0 0 40 37" ><circle cx="9.8" cy="9.8" r="1.25" fill="#fff" stroke="#8a8a8a" stroke-width=".7"/><circle cx="20" cy="9.8" r="1.25" fill="#fff" stroke="#8a8a8a" stroke-width=".7"/><circle cx="22.8" cy="19.2" r="1.25" fill="#fff" stroke="#8a8a8a" stroke-width=".7"/><circle cx="30.6" cy="19.2" r="1.25" fill="#fff" stroke="#8a8a8a" stroke-width=".7"/></svg>
</div>
</body></html>
